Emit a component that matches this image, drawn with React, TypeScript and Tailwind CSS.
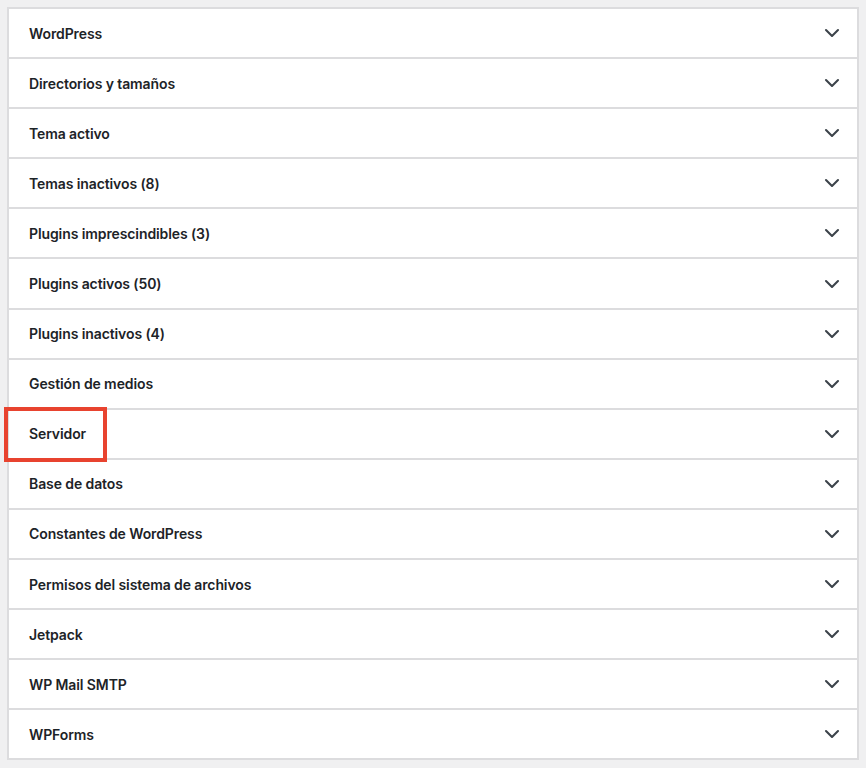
import { ChevronDown } from "lucide-react";

const sections = [
  "WordPress",
  "Directorios y tamaños",
  "Tema activo",
  "Temas inactivos (8)",
  "Plugins imprescindibles (3)",
  "Plugins activos (50)",
  "Plugins inactivos (4)",
  "Gestión de medios",
  "Servidor",
  "Base de datos",
  "Constantes de WordPress",
  "Permisos del sistema de archivos",
  "Jetpack",
  "WP Mail SMTP",
  "WPForms",
];

export default function App() {
  return (
    <div
      className="min-h-screen bg-[#f0f0f1] p-[7px]"
      style={{ fontFamily: "Inter, 'Noto Sans', sans-serif" }}
    >
      <div className="border-x-2 border-t-2 border-[#dcdcde] bg-white">
        {sections.map((title) => (
          <div
            key={title}
            className="relative flex h-[50.1px] items-center justify-between border-b-2 border-[#dcdcde] pl-[20px] pr-[13px]"
          >
            <span className="text-[14px] font-semibold tracking-[-0.1px] text-[#1d2327]">
              {title}
            </span>
            <ChevronDown className="h-6 w-6 text-[#3c434a]" strokeWidth={2.1} />
            {title === "Servidor" && (
              <div className="absolute left-[-5px] top-[-3px] h-[55px] w-[103px] border-[4px] border-[#e8432f]" />
            )}
          </div>
        ))}
      </div>
    </div>
  );
}
